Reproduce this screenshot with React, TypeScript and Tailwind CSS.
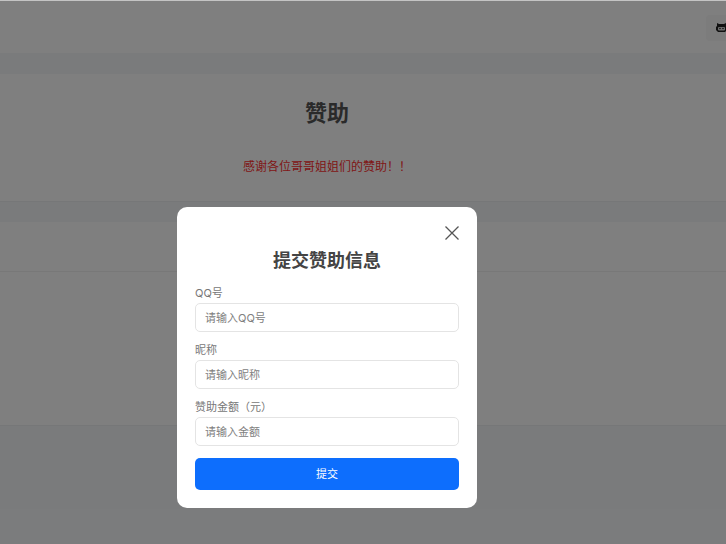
const font = "font-['Inter','Liberation_Sans','Noto_Sans_CJK_SC',sans-serif]";

const fields = [
  { label: "QQ号", placeholder: "请输入QQ号" },
  { label: "昵称", placeholder: "请输入昵称" },
  { label: "赞助金额（元）", placeholder: "请输入金额" },
];

const App = () => {
  return (
    <div className={`relative h-[544px] w-[726px] overflow-hidden bg-[#f5f7f9] ${font}`}>
      {/* page behind the overlay */}
      <div className="h-[1px] bg-[#c4c4c4]" />
      <div className="h-[1px] bg-white" />
      <header className="flex h-[51px] items-center justify-end bg-white">
        <div className="flex h-[26px] w-[20px] items-center justify-end rounded-l bg-[#f8f8f8]">
          <svg width="11" height="10" viewBox="0 0 11 10" className="mr-[-1px] mb-[1px]">
            <path d="M1 4V1l2 1h5l2-1v3l1 1v3l-2 2H2L0 8V5z" fill="#222" />
            <rect x="2" y="5" width="7" height="3.5" rx="1" fill="#ddd" />
            <circle cx="4" cy="6.5" r="0.8" fill="#222" />
            <circle cx="7" cy="6.5" r="0.8" fill="#222" />
          </svg>
        </div>
      </header>
      <section className="mt-[21px] flex h-[128px] flex-col items-center border-b border-[#eceef0] bg-white pr-[72px]">
        <h1 className="mt-[24px] text-[22px] leading-[30px] font-bold text-[#555]">赞助</h1>
        <p className="mt-[30px] text-xs leading-[18px] text-[#ff3030]">感谢各位哥哥姐姐们的赞助！！</p>
      </section>
      <section className="mt-[20px] h-[204px] border-b border-[#eceef0] bg-white">
        <div className="h-[50px] border-b border-[#f0f0f0]" />
      </section>

      {/* overlay with the form */}
      <div className="absolute inset-x-0 top-[1px] bottom-0 flex items-start justify-center bg-black/50 pt-[206px] pr-[72px]">
        <div className="h-[301px] w-[300px] rounded-[10px] bg-white px-[18px] pt-[19px]">
          <div className="flex justify-end">
            <svg width="14" height="14" viewBox="0 0 14 14" fill="none" stroke="#555" strokeWidth="1.3">
              <path d="M0.5 0.5l13 13M13.5 0.5l-13 13" />
            </svg>
          </div>
          <h2 className="mt-[9px] text-center text-lg leading-[24px] font-bold text-[#444]">提交赞助信息</h2>
          <form className="mt-[12px] flex flex-col">
            {fields.map((field) => (
              <div key={field.label} className="mb-[10px] flex flex-col">
                <label className="mb-[2px] text-[11px] leading-[16px] text-[#777]">{field.label}</label>
                <input
                  placeholder={field.placeholder}
                  className="h-[29px] rounded-[5px] border border-[#e4e4e4] px-[9px] text-[11px] outline-none placeholder:text-[#808080]"
                />
              </div>
            ))}
            <button
              type="button"
              className="mt-[2px] h-[32px] rounded-[5px] bg-[#0d6efd] text-[11px] text-white"
            >
              提交
            </button>
          </form>
        </div>
      </div>
    </div>
  );
};

export default App;
